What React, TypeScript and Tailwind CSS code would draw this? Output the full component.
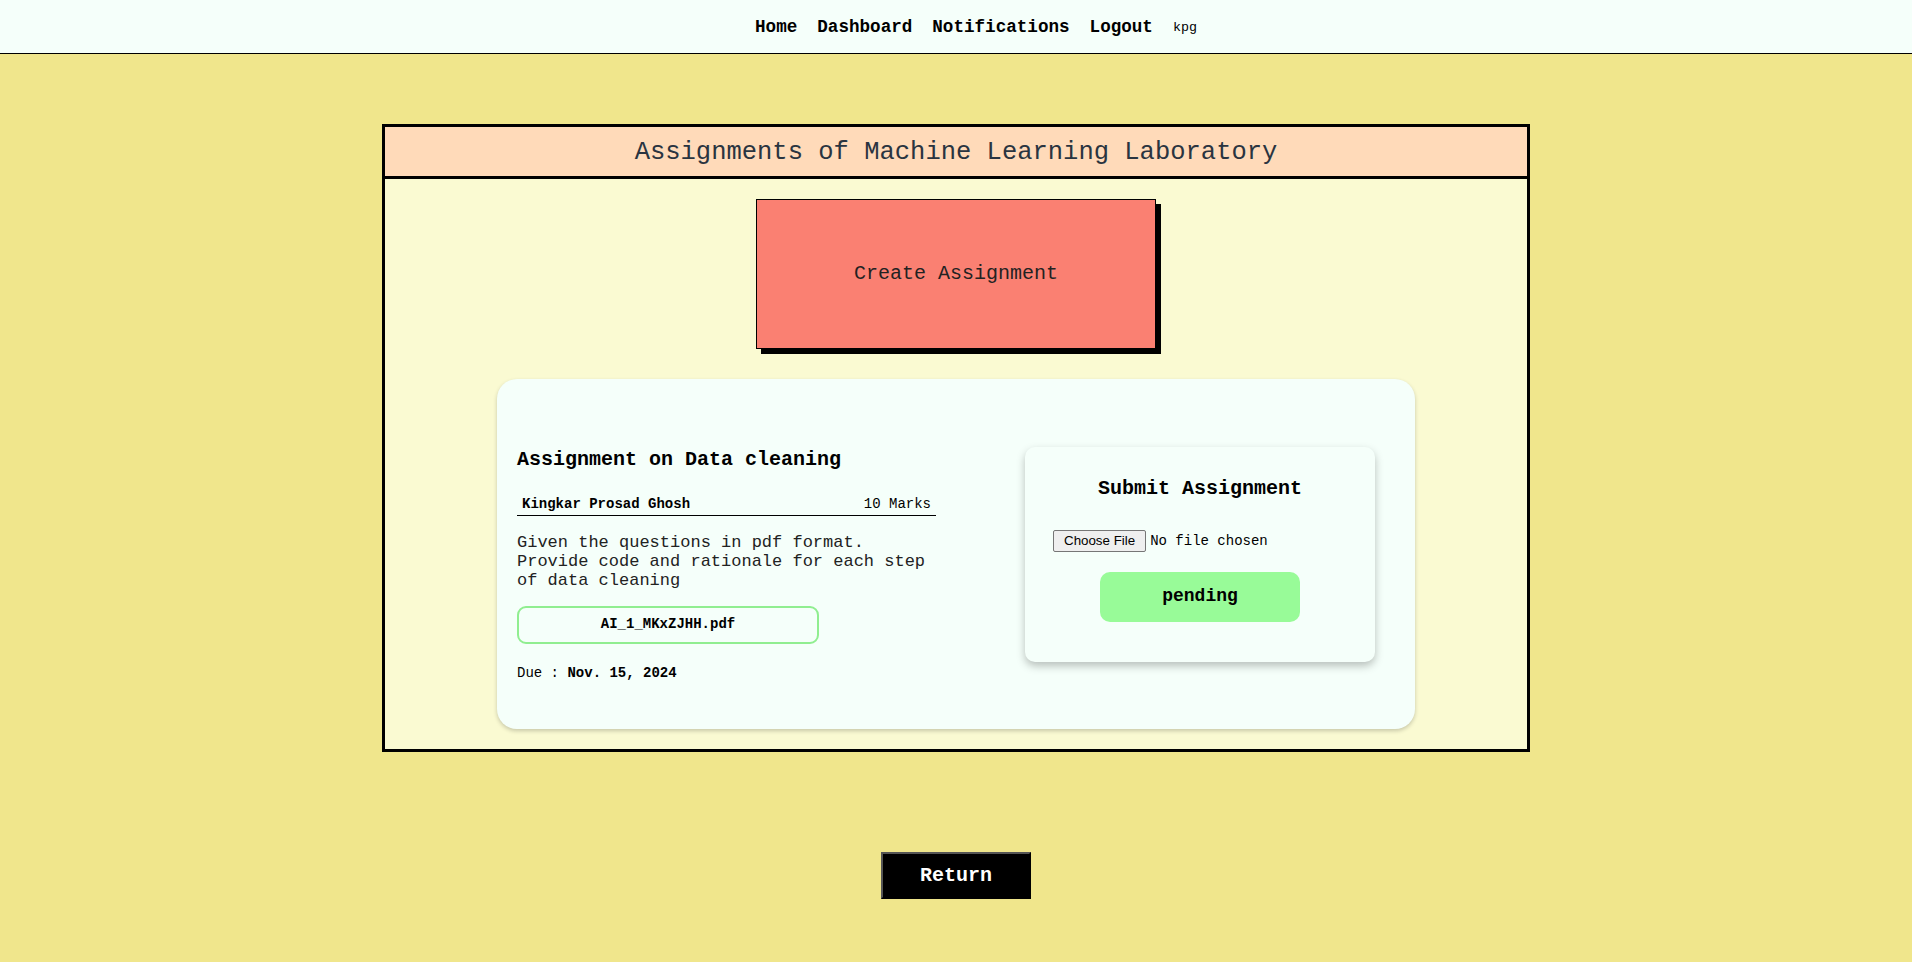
import React from 'react';

const mono = { fontFamily: '"Liberation Mono", "Courier New", monospace' };

function Navbar() {
  return (
    <nav className="h-[54px] bg-[#F5FFFA] border-b border-black flex items-center justify-center pt-[2px]">
      <ul className="flex items-center gap-5 pl-10 text-black">
        <li className="text-[17.6px] font-bold">Home</li>
        <li className="text-[17.6px] font-bold">Dashboard</li>
        <li className="text-[17.6px] font-bold">Notifications</li>
        <li className="text-[17.6px] font-bold">Logout</li>
        <li className="text-[13.33px]">kpg</li>
      </ul>
    </nav>
  );
}

function AssignmentCard() {
  return (
    <div className="w-[918px] h-[350px] bg-[#F5FFFA] rounded-[20px] shadow-[0_2px_4px_rgba(0,0,0,0.2)] flex items-center pl-5">
      {/* left: assignment info */}
      <div className="w-[419px] pt-[20px]">
        <h3 className="text-[20px] font-bold text-black leading-[23px]">Assignment on Data cleaning</h3>
        <div className="mt-[24px] flex justify-between px-[5px] pb-[2px] border-b border-black text-[14px] text-black leading-[18px]">
          <span className="font-bold">Kingkar Prosad Ghosh</span>
          <span>10 Marks</span>
        </div>
        <p className="mt-[17px] text-[17px] leading-[19px] text-[#222]">
          Given the questions in pdf format. Provide code and rationale for each step of data cleaning
        </p>
        <div className="mt-[16px] w-[302px] h-[38px] border-2 border-[#90EE90] rounded-[9px] flex items-center justify-center text-[14px] font-bold text-black">
          AI_1_MKxZJHH.pdf
        </div>
        <div className="mt-[21px] text-[14px] text-black leading-[16px]">
          Due : <span className="font-bold">Nov. 15, 2024</span>
        </div>
      </div>

      {/* right: submit box */}
      <div className="ml-[89px] w-[350px] h-[215px] bg-[#F5FFFA] rounded-[10px] shadow-[0_4px_8px_rgba(0,0,0,0.25)] pt-[30px] flex flex-col">
        <h3 className="text-center text-[20px] font-bold text-black leading-[23px]">Submit Assignment</h3>
        <div className="mt-[30px] pl-7 h-[22px] flex items-center">
          <input
            type="file"
            className="text-[14px] text-black file:mr-[4px] file:h-[22px] file:px-[10px] file:bg-[#efefef] file:border file:border-[#767676] file:rounded-[2px] file:text-[13.33px] file:font-[Liberation_Sans,Arial,sans-serif] file:text-black"
            style={mono}
          />
        </div>
        <div className="mt-5 flex justify-center">
          <button className="w-[200px] h-[50px] bg-[#98FB98] rounded-[10px] text-[18px] font-bold text-black">
            pending
          </button>
        </div>
      </div>
    </div>
  );
}

export default function App() {
  return (
    <div className="min-h-screen bg-[#F0E68C]" style={mono}>
      <Navbar />

      <main className="flex flex-col items-center pt-[70px]">
        <div className="w-[1148px] border-[3px] border-black bg-[#FAFAD2]">
          <div className="h-[52px] bg-[#FFDAB9] border-b-[3px] border-black flex items-center justify-center pt-[3px]">
            <h2 className="text-[25.5px] text-[#2a3440] font-normal">Assignments of Machine Learning Laboratory</h2>
          </div>

          <div className="flex flex-col items-center pt-5 pb-5">
            <button className="w-[400px] h-[150px] bg-[#FA8072] border border-black shadow-[5px_5px_0_#000] text-[20px] text-[#222]">
              Create Assignment
            </button>
            <div className="mt-[30px]">
              <AssignmentCard />
            </div>
          </div>
        </div>

        <button className="mt-[100px] w-[150px] h-[47px] bg-black text-white text-[20px] font-bold border-2 border-t-[#555] border-l-[#555] border-r-black border-b-black">
          Return
        </button>
      </main>
    </div>
  );
}
